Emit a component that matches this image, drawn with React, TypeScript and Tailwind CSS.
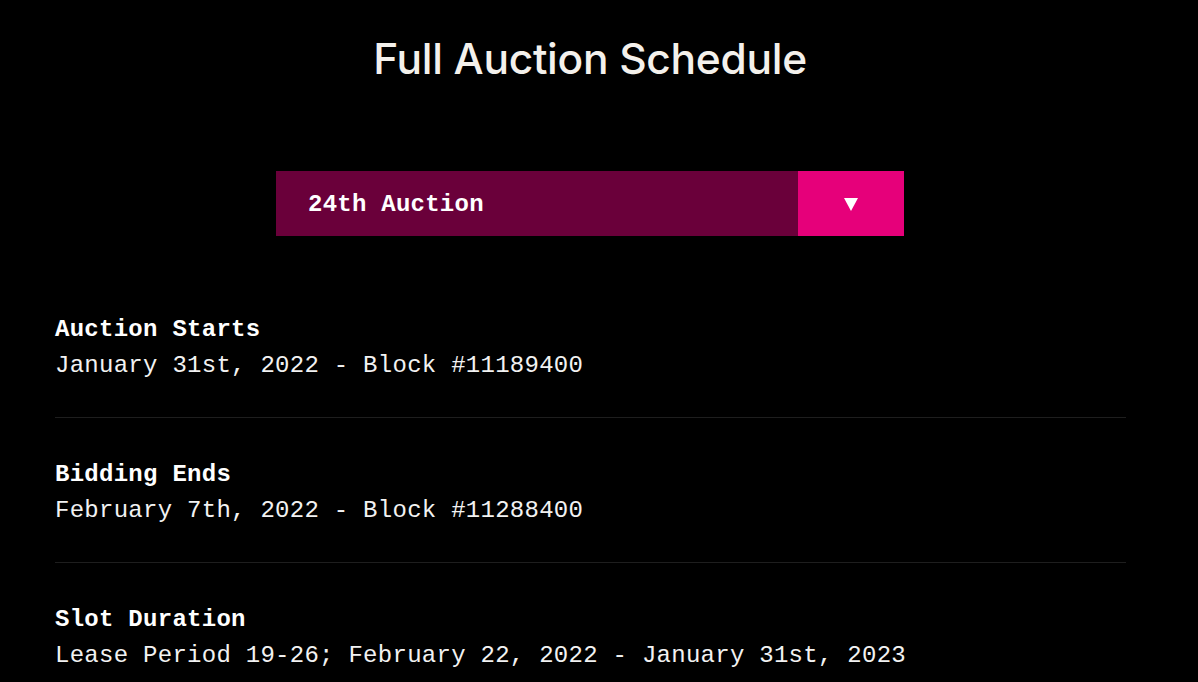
import React from 'react';

interface ScheduleItem {
  label: string;
  value: string;
}

const schedule: ScheduleItem[] = [
  { label: 'Auction Starts', value: 'January 31st, 2022 - Block #11189400' },
  { label: 'Bidding Ends', value: 'February 7th, 2022 - Block #11288400' },
  { label: 'Slot Duration', value: 'Lease Period 19-26; February 22, 2022 - January 31st, 2023' },
];

const mono = { fontFamily: '"Liberation Mono", "DejaVu Sans Mono", monospace' };

const App: React.FC = () => {
  return (
    <div className="min-h-screen bg-black text-[#f4f1ec] overflow-hidden">
      <div className="w-[1180px]">
        <h1
          className="pt-[34px] text-center text-[42.5px] leading-[50px] font-medium tracking-[-0.3px]"
          style={{ fontFamily: 'Inter, "Liberation Sans", sans-serif' }}
        >
          Full Auction Schedule
        </h1>

        <div className="mt-[87px] flex justify-center">
          <button className="flex h-[65px] w-[628px] items-stretch" style={mono}>
            <span className="flex flex-1 items-center bg-[#6a003a] pl-[32px] pt-[3px] text-[24px] font-bold tracking-[0.25px] text-white">
              24th Auction
            </span>
            <span className="flex w-[106px] items-center justify-center bg-[#e6007a]">
              <svg width="16" height="16" viewBox="0 0 16 16">
                <path d="M1 2h14L8 15z" fill="#fff" />
              </svg>
            </span>
          </button>
        </div>

        <div className="ml-[55px] mt-[76px] w-[1071px] tracking-[0.27px]" style={mono}>
          {schedule.map((item, i) => (
            <div key={item.label}>
              <div className="text-[24px] leading-[36px] font-bold text-white">{item.label}</div>
              <div className="text-[24px] leading-[36px] text-[#f2f2f2]">{item.value}</div>
              {i < schedule.length - 1 && (
                <div className="mt-[33px] mb-[39px] h-px bg-[#1e1e1e]" />
              )}
            </div>
          ))}
        </div>
      </div>
    </div>
  );
};

export default App;
